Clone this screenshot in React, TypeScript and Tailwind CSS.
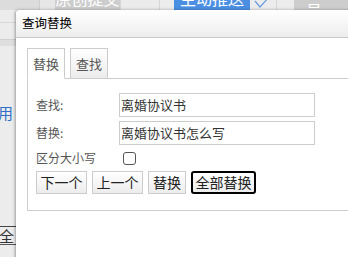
const font = { fontFamily: '"Noto Sans CJK SC", "Noto Sans", sans-serif' };

const Tab = ({ label, active }: { label: string; active?: boolean }) => (
  <div
    className={
      "h-[31px] px-[5px] flex items-center border border-[#ccc] text-[13px] text-[#555] " +
      (active ? "bg-white border-b-white relative z-10" : "bg-gradient-to-b from-white to-[#ececec] h-[30px]")
    }
  >
    {label}
  </div>
);

const Btn = ({ label, w, focus }: { label: string; w: string; focus?: boolean }) => (
  <button
    className={
      "h-[23px] flex items-center justify-center text-[14px] text-[#222] bg-gradient-to-b from-white to-[#ececec] " +
      w +
      (focus ? " border-2 border-black rounded-[3px]" : " border border-[#ccc]")
    }
  >
    {label}
  </button>
);

export default function App() {
  return (
    <div className="relative w-[348px] h-[257px] overflow-hidden bg-[#ececec]" style={font}>
      {/* page behind the dialog */}
      <div className="h-[10px] flex overflow-hidden text-white text-[16px]">
        <div className="w-[40px] h-[10px] bg-[#dcdcdc] border-r border-[#cfcfcf]" />
        <div className="w-[15px] h-[10px] bg-[#e6e6e6]" />
        <div className="w-[65px] h-[24px] -mt-[14px] bg-[#cdcdcd] flex items-center justify-center">原创提交</div>
        <div className="w-[40px] h-[10px] bg-[#ebebeb] border-l border-r border-[#d6d6d6]" />
        <div className="w-[14px] h-[10px] bg-[#ececec]" />
        <div className="w-[76px] h-[24px] -mt-[14px] bg-[#4b8fe3] flex items-center justify-center">主动推送</div>
        <div className="w-[26px] h-[10px] flex items-start justify-center">
          <svg width="18" height="10" viewBox="0 0 18 10">
            <path d="M1 1 L6 7 L16 -4" stroke="#6c9be0" strokeWidth="1.2" fill="none" />
          </svg>
        </div>
        <div className="w-[18px] h-[10px] border-l border-[#d6d6d6]" />
        <div className="flex-1 h-[24px] -mt-[14px] bg-[#cdcdcd] flex items-center pl-[12px]">官方号</div>
      </div>
      <div className="w-[16px] flex flex-col">
        <div className="h-[13px] border-b border-[#d8d8d8]" />
        <div className="h-[17px] border-b border-[#cfcfcf]" />
        <div className="h-[6px] bg-[#dedede]" />
        <div className="h-[58px]" />
        <div className="h-[18px] text-[15px] leading-[18px] text-[#2f6fc7] -ml-[2px]">用</div>
        <div className="h-[105px] border-b border-[#444]" />
        <div className="h-[17px] text-[15px] leading-[17px] text-[#333] -ml-[1px]">全</div>
        <div className="border-b border-[#555]" />
      </div>

      {/* dialog */}
      <div className="absolute left-[16px] top-[10px] w-[360px] h-[270px] bg-white rounded-tl-[4px] shadow-[-1px_0_3px_rgba(0,0,0,0.35)] flex flex-col">
        <div className="h-[28px] shrink-0 flex items-center px-[6px] text-[12.5px] text-black border-b border-[#c8c8c8] rounded-tl-[4px] bg-gradient-to-b from-white to-[#ededed]">
          查询替换
        </div>
        <div className="pl-[11px] pt-[10px]">
          <div className="flex gap-[5px] items-start">
            <Tab label="替换" active />
            <Tab label="查找" />
          </div>
          <div className="-mt-px border border-[#ccc] h-[133px] pl-[8px] pt-[14px] flex flex-col">
            <div className="flex items-center h-[24px]">
              <div className="w-[83px] text-[12px] text-[#555]">查找:</div>
              <div className="w-[196px] h-[24px] border border-[#ccc] px-[1px] flex items-center text-[13px] text-[#333]">离婚协议书</div>
            </div>
            <div className="flex items-center h-[24px] mt-[4px]">
              <div className="w-[83px] text-[12px] text-[#555]">替换:</div>
              <div className="w-[196px] h-[24px] border border-[#ccc] px-[1px] flex items-center text-[13px] text-[#333]">离婚协议书怎么写</div>
            </div>
            <div className="flex items-center h-[14px] mt-[6px]">
              <div className="w-[87px] text-[12px] text-[#555]">区分大小写</div>
              <div className="w-[13px] h-[13px] border border-[#555] rounded-[3px] bg-white" />
            </div>
            <div className="flex gap-[5px] mt-[6px] items-center">
              <Btn label="下一个" w="w-[51px]" />
              <Btn label="上一个" w="w-[51px]" />
              <Btn label="替换" w="w-[38px]" />
              <Btn label="全部替换" w="w-[65px]" focus />
            </div>
          </div>
        </div>
      </div>
    </div>
  );
}
